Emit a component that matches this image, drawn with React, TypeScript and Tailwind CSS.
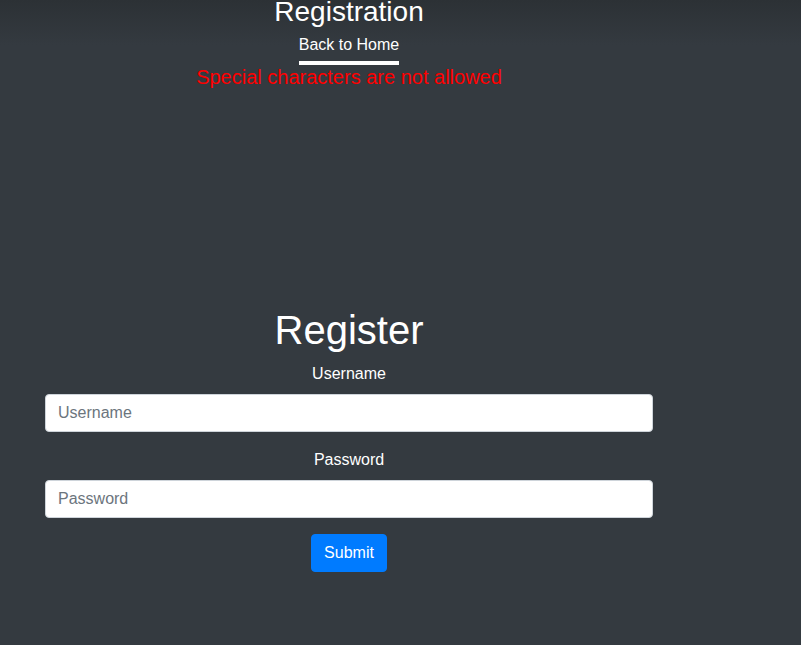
export default function App() {
  return (
    <div className="min-h-screen w-full bg-[#343a40] bg-[linear-gradient(to_bottom,#2c3135_0px,#343a40_45px)] font-['Liberation_Sans',Arial,sans-serif] text-white">
      <div className="flex w-[698px] flex-col items-center px-[45px]">
        <header className="flex flex-col items-center">
          <h3 className="mt-[-5px] text-[28px] leading-[1.2]">Registration</h3>
          <nav>
            <a
              href="#"
              className="block border-b-4 border-white py-1 text-base leading-6 text-white"
            >
              Back to Home
            </a>
          </nav>
        </header>
        <p className="text-[20px] leading-6 text-[#ff0000]">
          Special characters are not allowed
        </p>

        <form className="mt-[217px] flex w-full flex-col items-center">
          <h1 className="mb-2 text-[40px] leading-[1.2]">Register</h1>
          <div className="mb-4 flex w-full flex-col items-center">
            <label className="mb-2 text-base leading-6">Username</label>
            <input
              type="text"
              placeholder="Username"
              className="h-[38px] w-full rounded border border-[#ced4da] bg-white px-3 text-base text-[#495057] placeholder:text-[#6c757d] outline-none"
            />
          </div>
          <div className="mb-4 flex w-full flex-col items-center">
            <label className="mb-2 text-base leading-6">Password</label>
            <input
              type="password"
              placeholder="Password"
              className="h-[38px] w-full rounded border border-[#ced4da] bg-white px-3 text-base text-[#495057] placeholder:text-[#6c757d] outline-none"
            />
          </div>
          <button
            type="submit"
            className="h-[38px] rounded border border-[#007bff] bg-[#007bff] px-3 text-base leading-6 text-white"
          >
            Submit
          </button>
        </form>
      </div>
    </div>
  );
}
